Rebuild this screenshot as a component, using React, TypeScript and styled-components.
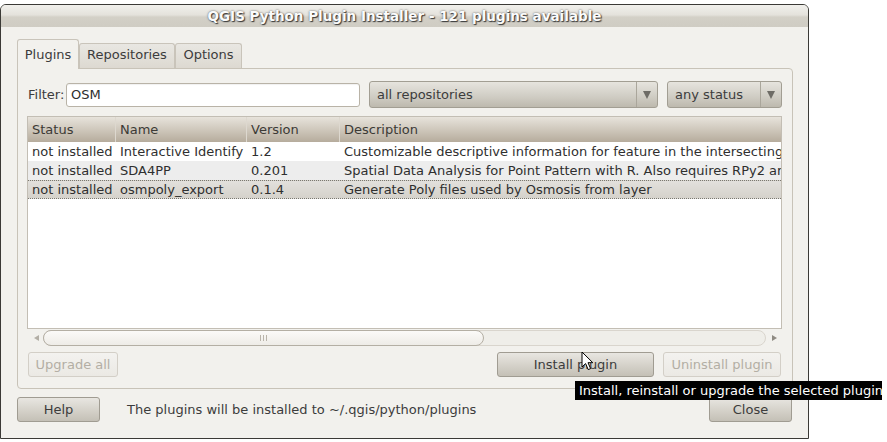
import React from "react";
import styled, { createGlobalStyle } from "styled-components";

const GlobalStyle = createGlobalStyle`
  html, body { margin: 0; padding: 0; background: #ffffff; }
  body {
    font-family: "DejaVu Sans", "Liberation Sans", sans-serif;
    font-size: 13px;
    color: #3c3c3c;
  }
  * { box-sizing: border-box; }
`;

const Screen = styled.div`
  position: relative;
  width: 887px;
  height: 442px;
  overflow: hidden;
  padding-top: 4px;
`;

const Window = styled.div`
  width: 809px;
  height: 435px;
  border: 1px solid #3b3a36;
  border-radius: 6px 6px 0 0;
  background: #f2f1ed;
  display: flex;
  flex-direction: column;
  overflow: hidden;
`;

const TitleBar = styled.div`
  flex: none;
  height: 22px;
  display: flex;
  align-items: center;
  justify-content: center;
  background: linear-gradient(#f1f0ec 0%, #e4e2dc 45%, #d3d0c7 55%, #cfccc3 100%);
  font-weight: bold;
  font-size: 13.5px;
  color: #fbfbfb;
  text-shadow: 1px 1px 1px #3a3a3a, 0 0 2px #555555;
  white-space: nowrap;
`;

const Body = styled.div`
  flex: 1;
  display: flex;
  flex-direction: column;
  padding: 12px 15px 0 16px;
`;

const TabBar = styled.div`
  position: relative;
  z-index: 2;
  height: 29px;
  display: flex;
  align-items: flex-end;
`;

const Tab = styled.div<{ $active?: boolean; $width: number }>`
  width: ${(p) => p.$width}px;
  height: ${(p) => (p.$active ? 30 : 25)}px;
  margin-bottom: ${(p) => (p.$active ? -1 : 0)}px;
  padding-bottom: ${(p) => (p.$active ? 0 : 3)}px;
  display: flex;
  align-items: center;
  justify-content: center;
  border: 1px solid #c9c4ba;
  border-bottom: none;
  border-radius: 3px 3px 0 0;
  background: ${(p) => (p.$active ? "#f2f1ed" : "linear-gradient(#e9e7e2, #ddd9d1)")};
  color: #3c3c3c;
  white-space: nowrap;
`;

const Pane = styled.div`
  position: relative;
  z-index: 1;
  height: 321px;
  border: 1px solid #c8c3b8;
  border-radius: 0 4px 4px 4px;
  padding: 12px 10px 11px 9px;
  display: flex;
  flex-direction: column;
`;

const FilterRow = styled.div`
  height: 27px;
  display: flex;
  align-items: center;
`;

const FilterLabel = styled.label`
  width: 39px;
  padding-left: 1px;
  white-space: nowrap;
`;

const TextInput = styled.div`
  width: 294px;
  height: 24px;
  border: 1px solid #b9b3a7;
  border-radius: 3px;
  background: #ffffff;
  padding-left: 4px;
  display: flex;
  align-items: center;
  color: #2e2e2e;
  box-shadow: inset 0 1px 1px rgba(0, 0, 0, 0.06);
`;

const Combo = styled.div<{ $width?: number }>`
  margin-left: 9px;
  ${(p) => (p.$width ? `width: ${p.$width}px;` : "flex: 1;")}
  height: 27px;
  border: 1px solid #a29e93;
  border-radius: 3px;
  background: linear-gradient(#e6e4de, #cfccc3 60%, #bdb9ae);
  display: flex;
  align-items: center;
`;

const ComboText = styled.span`
  flex: 1;
  padding-left: 7px;
  white-space: nowrap;
  color: #3c3c3c;
`;

const ComboArrow = styled.span`
  width: 21px;
  height: 100%;
  border-left: 1px solid #aaa69b;
  display: flex;
  align-items: center;
  justify-content: center;
  &::after {
    content: "";
    border-left: 4px solid transparent;
    border-right: 4px solid transparent;
    border-top: 8px solid #6e6c66;
  }
`;

const TableArea = styled.div`
  margin-top: 8px;
  height: 230px;
  display: flex;
  flex-direction: column;
`;

const View = styled.div`
  flex: 1;
  border: 1px solid #c3beb4;
  background: #ffffff;
  overflow: hidden;
  display: flex;
  flex-direction: column;
`;

const cols = "88px 131px 93px 1fr";

const HeaderRow = styled.div`
  height: 25px;
  flex: none;
  display: grid;
  grid-template-columns: ${cols};
  background: linear-gradient(#e7e3db, #cfc8bc 50%, #b6ac9d);
`;

const HeaderCell = styled.div<{ $last?: boolean }>`
  padding-left: 4px;
  display: flex;
  align-items: center;
  border-right: ${(p) => (p.$last ? "none" : "1px solid #ddd8cf")};
  white-space: nowrap;
  color: #3c3a36;
`;

const Row = styled.div<{ $alt?: boolean; $selected?: boolean }>`
  height: 19px;
  flex: none;
  display: grid;
  grid-template-columns: ${cols};
  background: ${(p) =>
    p.$selected ? "linear-gradient(#e2e0dc, #d5d2cb)" : p.$alt ? "#ededed" : "#ffffff"};
  border-top: 1px dotted ${(p) => (p.$selected ? "#7a7870" : "transparent")};
  border-bottom: 1px dotted ${(p) => (p.$selected ? "#7a7870" : "transparent")};
`;

const Cell = styled.div`
  padding-left: 4px;
  display: flex;
  align-items: center;
  white-space: nowrap;
  overflow: hidden;
  color: #2f2f2f;
`;

const ScrollBar = styled.div`
  height: 17px;
  flex: none;
  display: flex;
  align-items: center;
`;

const ScrollArrow = styled.span<{ $dir: "left" | "right" }>`
  width: 16px;
  height: 100%;
  display: flex;
  align-items: center;
  justify-content: center;
  &::after {
    content: "";
    border-top: 3px solid transparent;
    border-bottom: 3px solid transparent;
    ${(p) =>
      p.$dir === "left"
        ? "border-right: 5px solid #b3afa6; margin-left: 2px;"
        : "border-left: 5px solid #8f8b83; margin-left: 0px;"}
  }
`;

const Track = styled.div`
  flex: 1;
  height: 16px;
  border: 1px solid #d9d5cd;
  border-radius: 8px;
  background: #efeee9;
  display: flex;
`;

const Thumb = styled.div`
  width: 441px;
  height: 16px;
  margin: -1px 0 0 -1px;
  border: 1px solid #b4afa4;
  border-radius: 8px;
  background: linear-gradient(#fbfaf8, #eeece7);
  display: flex;
  align-items: center;
  justify-content: center;
  gap: 2px;
`;

const Grip = styled.span`
  width: 1px;
  height: 6px;
  background: #b9b4aa;
`;

const ButtonRow = styled.div`
  margin-top: 6px;
  height: 25px;
  display: flex;
  align-items: center;
  padding-right: 1px;
`;

const Spacer = styled.div`
  flex: 1;
`;

const Button = styled.div<{ $width: number; $disabled?: boolean; $gap?: number }>`
  width: ${(p) => p.$width}px;
  height: 25px;
  margin-left: ${(p) => p.$gap ?? 0}px;
  border: 1px solid ${(p) => (p.$disabled ? "#d3cfc7" : "#a09c92")};
  border-radius: 3px;
  background: ${(p) =>
    p.$disabled ? "linear-gradient(#f3f2ef, #ebe9e4)" : "linear-gradient(#e8e6e1, #d6d3cb 50%, #c4c0b6)"};
  color: ${(p) => (p.$disabled ? "#b3aea4" : "#3c3c3c")};
  display: flex;
  align-items: center;
  justify-content: center;
  white-space: nowrap;
`;

const BottomRow = styled.div`
  margin-top: 8px;
  height: 24px;
  display: flex;
  align-items: center;
  padding-right: 1px;
`;

const PathNote = styled.span`
  margin-left: 27px;
  white-space: nowrap;
  color: #3c3c3c;
`;

const Tooltip = styled.div`
  position: absolute;
  z-index: 10;
  left: 575px;
  top: 381px;
  width: 307px;
  height: 19px;
  background: #000000;
  color: #ffffff;
  padding-left: 4px;
  line-height: 19px;
  white-space: nowrap;
`;

const Cursor = styled.svg`
  position: absolute;
  z-index: 11;
  left: 581px;
  top: 351px;
`;

const rows = [
  {
    status: "not installed",
    name: "Interactive Identify",
    version: "1.2",
    desc: "Customizable descriptive information for feature in the intersecting layers",
  },
  {
    status: "not installed",
    name: "SDA4PP",
    version: "0.201",
    desc: "Spatial Data Analysis for Point Pattern with R. Also requires RPy2 and R",
  },
  {
    status: "not installed",
    name: "osmpoly_export",
    version: "0.1.4",
    desc: "Generate Poly files used by Osmosis from layer",
  },
];

export default function App() {
  return (
    <Screen>
      <GlobalStyle />
      <Window>
        <TitleBar>QGIS Python Plugin Installer - 121 plugins available</TitleBar>
        <Body>
          <TabBar>
            <Tab $active $width={62}>
              Plugins
            </Tab>
            <Tab $width={96}>Repositories</Tab>
            <Tab $width={67}>Options</Tab>
          </TabBar>
          <Pane>
            <FilterRow>
              <FilterLabel>Filter:</FilterLabel>
              <TextInput>OSM</TextInput>
              <Combo $width={289}>
                <ComboText>all repositories</ComboText>
                <ComboArrow />
              </Combo>
              <Combo>
                <ComboText>any status</ComboText>
                <ComboArrow />
              </Combo>
            </FilterRow>
            <TableArea>
              <View>
                <HeaderRow>
                  <HeaderCell>Status</HeaderCell>
                  <HeaderCell>Name</HeaderCell>
                  <HeaderCell>Version</HeaderCell>
                  <HeaderCell $last>Description</HeaderCell>
                </HeaderRow>
                {rows.map((r, i) => (
                  <Row key={r.name} $alt={i === 1} $selected={i === 2}>
                    <Cell>{r.status}</Cell>
                    <Cell>{r.name}</Cell>
                    <Cell>{r.version}</Cell>
                    <Cell>{r.desc}</Cell>
                  </Row>
                ))}
              </View>
              <ScrollBar>
                <ScrollArrow $dir="left" />
                <Track>
                  <Thumb>
                    <Grip />
                    <Grip />
                    <Grip />
                  </Thumb>
                </Track>
                <ScrollArrow $dir="right" />
              </ScrollBar>
            </TableArea>
            <ButtonRow>
              <Button $width={90} $gap={1} $disabled>
                Upgrade all
              </Button>
              <Spacer />
              <Button $width={157}>Install plugin</Button>
              <Button $width={118} $gap={9} $disabled>
                Uninstall plugin
              </Button>
            </ButtonRow>
          </Pane>
          <BottomRow>
            <Button $width={83}>Help</Button>
            <PathNote>The plugins will be installed to ~/.qgis/python/plugins</PathNote>
            <Spacer />
            <Button $width={83}>Close</Button>
          </BottomRow>
        </Body>
      </Window>
      <Tooltip>Install, reinstall or upgrade the selected plugin</Tooltip>
      <Cursor width="13" height="20" viewBox="0 0 13 20">
        <path
          d="M1 1 L1 16 L4.6 12.6 L7.2 18.6 L9.6 17.6 L7 11.7 L11.8 11.7 Z"
          fill="#ffffff"
          stroke="#000000"
          strokeWidth="1"
          strokeLinejoin="round"
        />
      </Cursor>
    </Screen>
  );
}
